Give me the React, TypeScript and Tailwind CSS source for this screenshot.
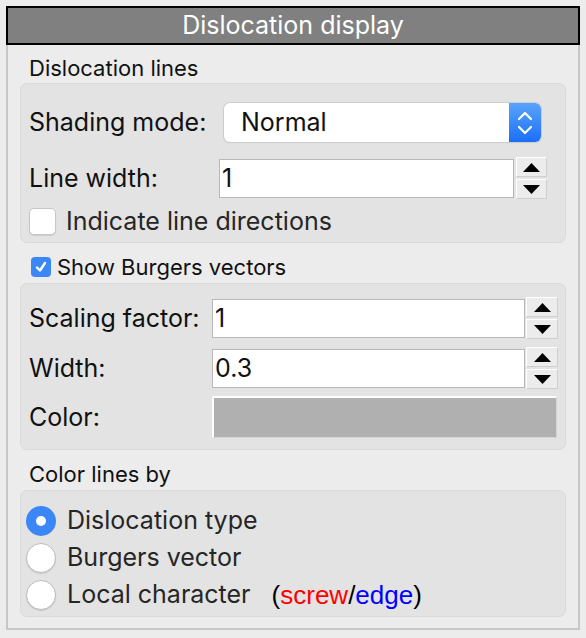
import { JSX } from 'react';

const Arrow = ({ down = false }: { down?: boolean }) => (
	<svg width="17" height="9" viewBox="0 0 17 9">
		{down ? <polygon points="0,0 17,0 8.5,9" fill="#000" /> : <polygon points="8.5,0 17,9 0,9" fill="#000" />}
	</svg>
);

const SpinButtons = ({ width }: { width: string }) => (
	<div className={`flex flex-col gap-[2px] ${width}`}>
		<div className="flex h-[20px] items-center justify-center border border-[#cfcfcf] border-t-white border-l-white bg-[#ececec]">
			<Arrow />
		</div>
		<div className="flex h-[20px] items-center justify-center border border-[#cfcfcf] border-t-white border-l-white bg-[#ececec]">
			<Arrow down />
		</div>
	</div>
);

const Label = ({ text, width }: { text: string; width: string }) => (
	<div className={`${width} text-[25px] leading-none text-[#111]`}>{text}</div>
);

const Radio = ({ checked, label }: { checked?: boolean; label: string }) => (
	<div className="flex h-[37px] items-center">
		{checked ? (
			<div className="flex h-[30px] w-[30px] items-center justify-center rounded-full bg-[#3b87f5]">
				<div className="h-[10px] w-[10px] rounded-full bg-white" />
			</div>
		) : (
			<div className="h-[30px] w-[30px] rounded-full border border-[#bcbcbc] bg-white shadow-[0_1px_1px_rgba(0,0,0,0.12)]" />
		)}
		<span className="ml-[11px] text-[25px] leading-none text-[#262626]">{label}</span>
	</div>
);

export default function App(): JSX.Element {
	return (
		<div className="h-[638px] w-[586px] bg-[#ececec] px-[6px] pt-[6px] font-[Inter,'Noto_Sans',sans-serif]">
			{/* Title bar */}
			<div className="flex h-[39px] items-center justify-center border-2 border-black bg-[#808080] text-[25px] leading-none text-white">
				Dislocation display
			</div>

			{/* Frame */}
			<div className="h-[585px] border-x-2 border-b-2 border-[#c7c7c7] px-[12px]">
				<div className="flex h-[38px] items-center pt-[8px] pl-[9px] text-[22px] leading-none text-[#111]">
					Dislocation lines
				</div>

				{/* Dislocation lines group */}
				<div className="h-[160px] rounded-[7px] border border-[#dadada] bg-[#e3e3e3] pt-[19px] pl-[8px]">
					<div className="flex h-[39px] items-center">
						<Label text="Shading mode:" width="w-[195px]" />
						<div className="flex h-[39px] w-[317px] overflow-hidden rounded-[6px] bg-white shadow-[0_0_0_1px_#cdcdcd,0_1px_1px_rgba(0,0,0,0.15)]">
							<div className="flex flex-1 items-center pl-[17px] text-[25px] leading-none text-[#111]">
								Normal
							</div>
							<div className="flex w-[32px] items-center justify-center bg-gradient-to-b from-[#59a3fb] to-[#1a6ef6]">
								<svg width="16" height="26" viewBox="0 0 16 26" fill="none" stroke="#fff" strokeWidth="2.2" strokeLinecap="round" strokeLinejoin="round">
									<polyline points="2,9 8,3 14,9" />
									<polyline points="2,17 8,23 14,17" />
								</svg>
							</div>
						</div>
					</div>

					<div className="mt-[15px] flex h-[42px] items-center">
						<Label text="Line width:" width="w-[190px]" />
						<div className="flex h-[39px] w-[295px] items-center border border-[#b8b8b8] bg-white pl-[2px] text-[25px] leading-none text-[#111]">
							1
						</div>
						<div className="ml-[2px]">
							<SpinButtons width="w-[31px]" />
						</div>
					</div>

					<div className="mt-[8px] flex h-[28px] items-center">
						<div className="h-[27px] w-[27px] rounded-[5px] border border-[#c6c6c6] bg-white shadow-[0_1px_1px_rgba(0,0,0,0.1)]" />
						<span className="ml-[10px] text-[25px] leading-none text-[#262626]">Indicate line directions</span>
					</div>
				</div>

				{/* Show Burgers vectors */}
				<div className="flex h-[40px] items-center pt-[8px] pl-[11px]">
					<div className="flex h-[20px] w-[20px] items-center justify-center rounded-[4px] bg-[#3b87f5]">
						<svg width="14" height="14" viewBox="0 0 14 14" fill="none" stroke="#fff" strokeWidth="2.4" strokeLinecap="round" strokeLinejoin="round">
							<polyline points="3,7.5 6,10.5 11,3" />
						</svg>
					</div>
					<span className="ml-[6px] text-[22px] leading-none text-[#111]">Show Burgers vectors</span>
				</div>

				{/* Burgers vectors group */}
				<div className="h-[167px] rounded-[7px] border border-[#dadada] bg-[#e3e3e3] pt-[12px] pl-[8px]">
					<div className="flex h-[44px] items-center">
						<Label text="Scaling factor:" width="w-[183px]" />
						<div className="flex h-[39px] w-[313px] items-center border border-[#b8b8b8] bg-white pl-[2px] text-[25px] leading-none text-[#111]">
							1
						</div>
						<div className="ml-[1px]">
							<SpinButtons width="w-[32px]" />
						</div>
					</div>

					<div className="mt-[6px] flex h-[44px] items-center">
						<Label text="Width:" width="w-[183px]" />
						<div className="flex h-[39px] w-[313px] items-center border border-[#b8b8b8] bg-white pl-[2px] text-[25px] leading-none text-[#111]">
							0.3
						</div>
						<div className="ml-[1px]">
							<SpinButtons width="w-[32px]" />
						</div>
					</div>

					<div className="mt-[6px] flex h-[42px] items-center">
						<Label text="Color:" width="w-[183px]" />
						<div className="h-[42px] w-[345px] border-t-2 border-l-2 border-white border-r border-b border-r-[#d4d4d4] border-b-[#d4d4d4] bg-[#b0b0b0]" />
					</div>
				</div>

				{/* Color lines by */}
				<div className="flex h-[40px] items-center pt-[8px] pl-[9px] text-[22px] leading-none text-[#111]">
					Color lines by
				</div>

				<div className="h-[127px] rounded-[7px] border border-[#dadada] bg-[#e3e3e3] pt-[11px] pl-[5px]">
					<Radio checked label="Dislocation type" />
					<Radio label="Burgers vector" />
					<div className="flex items-center">
						<Radio label="Local character" />
						<span className="ml-[21px] font-['Liberation_Sans',Arial,sans-serif] text-[26px] leading-none text-black">
							(<span className="text-[#ff0000]">screw</span>/<span className="text-[#0000ff]">edge</span>)
						</span>
					</div>
				</div>
			</div>
		</div>
	);
}
